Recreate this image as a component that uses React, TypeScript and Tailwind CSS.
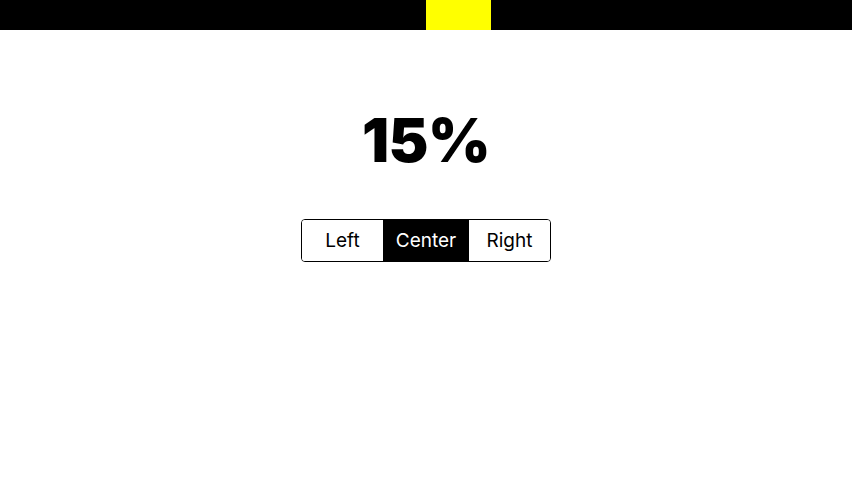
import { useState } from 'react';

const options = ['Left', 'Center', 'Right'];

export default function App() {
  const [align, setAlign] = useState('Center');

  return (
    <div className="w-[852px] h-[480px] bg-white font-['Inter',sans-serif] text-black">
      {/* top bar */}
      <div className="h-[30px] bg-black flex">
        <div className="w-[426px]" />
        <div className="w-[65px] bg-[#ffff00]" />
      </div>

      <div className="flex flex-col items-center">
        <h1 className="mt-[77px] text-[60px] leading-[66px] font-black tracking-[-0.5px]">15%</h1>

        <div className="mt-[46px] flex h-[43px] border border-black rounded-[4px] overflow-hidden">
          {options.map((opt) => (
            <button
              key={opt}
              onClick={() => setAlign(opt)}
              className={
                'flex items-center justify-center pt-[2px] text-[19px] font-normal ' +
                (opt === 'Center' ? 'w-[86px] ' : 'w-[81px] ') +
                (align === opt ? 'bg-black text-white' : 'bg-white text-black')
              }
            >
              {opt}
            </button>
          ))}
        </div>
      </div>
    </div>
  );
}
